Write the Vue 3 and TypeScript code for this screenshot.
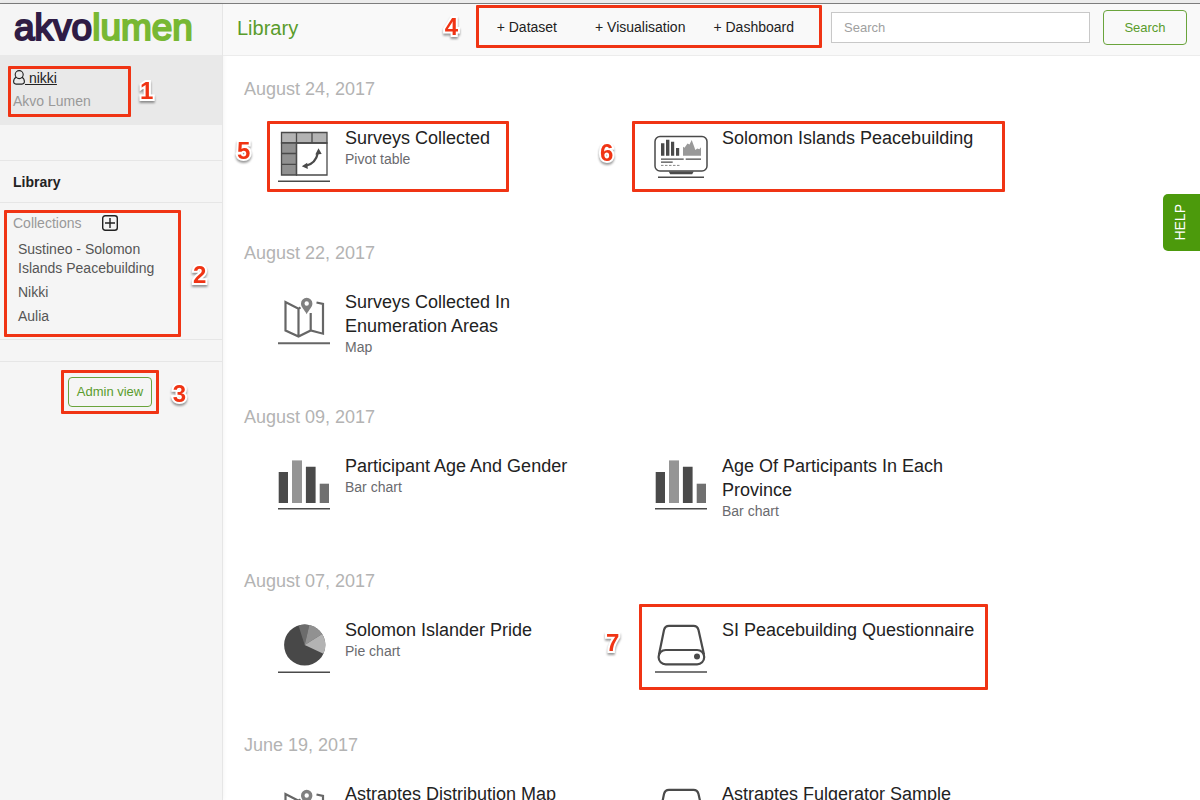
<script setup lang="ts">
import { ref } from 'vue'

type IconKind = 'pivot' | 'dashboard' | 'map' | 'bar' | 'pie' | 'dataset'

interface Entry {
  title: string
  kind: IconKind
  type?: string
  mark?: number
}

interface Group {
  date: string
  entries: Entry[]
}

const query = ref('')

const collections: string[] = ['Sustineo - Solomon Islands Peacebuilding', 'Nikki', 'Aulia']

const groups: Group[] = [
  {
    date: 'August 24, 2017',
    entries: [
      { title: 'Surveys Collected', kind: 'pivot', type: 'Pivot table', mark: 5 },
      { title: 'Solomon Islands Peacebuilding', kind: 'dashboard', mark: 6 },
    ],
  },
  {
    date: 'August 22, 2017',
    entries: [{ title: 'Surveys Collected In Enumeration Areas', kind: 'map', type: 'Map' }],
  },
  {
    date: 'August 09, 2017',
    entries: [
      { title: 'Participant Age And Gender', kind: 'bar', type: 'Bar chart' },
      { title: 'Age Of Participants In Each Province', kind: 'bar', type: 'Bar chart' },
    ],
  },
  {
    date: 'August 07, 2017',
    entries: [
      { title: 'Solomon Islander Pride', kind: 'pie', type: 'Pie chart' },
      { title: 'SI Peacebuilding Questionnaire', kind: 'dataset', mark: 7 },
    ],
  },
  {
    date: 'June 19, 2017',
    entries: [
      { title: 'Astraptes Distribution Map', kind: 'map' },
      { title: 'Astraptes Fulgerator Sample', kind: 'dataset' },
    ],
  },
]
</script>

<template>
  <div class="page">
    <div class="window-edge"></div>
    <div class="shell">
      <aside class="sidebar">
        <div class="logo"><span class="akvo">akvo</span><span class="lumen">lumen</span></div>

        <div class="user">
          <a href="#" class="user-name">
            <svg class="user-icon" width="12" height="15" viewBox="0 0 12 15" fill="none" stroke="#222" stroke-width="1.1">
              <circle cx="6.200" cy="4.600" r="4" />
              <path d="M3.200 7.200C1.400 8 .6 9.400.6 11.600c0 1.600.8 2.500 2.400 2.500h6c1.600 0 2.400-.9 2.400-2.500 0-2.200-.8-3.600-2.500-4.400" />
            </svg>&nbsp;nikki</a>
          <div class="org">Akvo Lumen</div>
          <span class="callout callout-1"><b>1</b></span>
        </div>

        <nav class="library-nav"><a href="#">Library</a></nav>

        <section class="collections">
          <div class="collections-head">
            <span>Collections</span>
            <button type="button" class="add" aria-label="Add collection">
              <svg width="16" height="16" viewBox="0 0 16 16" fill="none" stroke="#222" stroke-width="1.400">
                <rect x="0.700" y="0.700" width="14.600" height="14.600" rx="2.500" />
                <path d="M8 3v10M3 8h10" />
              </svg>
            </button>
          </div>
          <ul>
            <li v-for="name in collections" :key="name"><a href="#">{{ name }}</a></li>
          </ul>
          <span class="callout callout-2"><b>2</b></span>
        </section>

        <div class="admin">
          <div class="admin-wrap">
            <button type="button" class="outline admin-button">Admin view</button>
            <span class="callout callout-3"><b>3</b></span>
          </div>
        </div>
      </aside>

      <div class="main">
        <header class="topbar">
          <h1>Library</h1>
          <div class="create">
            <button type="button">+ Dataset</button>
            <button type="button">+ Visualisation</button>
            <button type="button">+ Dashboard</button>
            <span class="callout callout-4"><b>4</b></span>
          </div>
          <form class="search" @submit.prevent>
            <input v-model="query" type="text" placeholder="Search" aria-label="Search library" />
            <button type="submit" class="outline search-button">Search</button>
          </form>
        </header>

        <main class="listing">
          <section v-for="group in groups" :key="group.date" class="group">
            <h2>{{ group.date }}</h2>
            <ul class="entries">
              <li v-for="entry in group.entries" :key="entry.title" class="entry">
                <svg class="icon" width="54" height="58" viewBox="0 0 54 58" fill="none" aria-hidden="true">
                  <g v-if="entry.kind === 'pivot'" stroke="#4a4a4a" stroke-width="1.300">
                    <path d="M4.500 6.500H50V17H4.500Z" fill="#b3b3b3" />
                    <path d="M4.500 17H19.500V49H4.500Z" fill="#919191" />
                    <path d="M19.500 17H50V49H19.500ZM19.500 6.500V17M35 6.500V17M4.500 27.500h15M4.500 38.300h15" />
                    <path d="M28.500 40C35 38.500 39.500 34 40.800 27" stroke-width="2.200" />
                    <path d="M24.800 40.300l5.400-3.600.6 6.200zM41.500 22.200l3.200 5.900-6.400.3z" fill="#4a4a4a" stroke="none" />
                    <path d="M1 55.200H53" stroke-width="1.500" />
                  </g>
                  <g v-else-if="entry.kind === 'dashboard'" stroke="#4a4a4a" stroke-width="1.500">
                    <rect x="1" y="10.500" width="52" height="34.500" rx="5" />
                    <path d="M14.700 45.500h25l-1.500 2.700h-22z" fill="#4a4a4a" stroke="none" />
                    <path d="M7 17.300h3.400v12.400H7zM12 13.700h3.400v16H12zM17 15.700h3.200v14H17zM22 22h3.200v7.700H22z" fill="#4a4a4a" stroke="none" />
                    <path d="M29 29.700v-9l1.500 1 3-4.300 2 1 2.200-4.400 2.600 7 1 3 2-1.500 2 .8 1.700-2v8.400z" fill="#999" stroke="none" />
                    <path d="M7 33.200h22.700M31.700 33.200H47M7 36.200h11.700" stroke-width="1.200" />
                    <path d="M7 39.400h20" stroke="#888" stroke-width="1" stroke-dasharray="2.500 1.500" />
                    <path d="M4 51.200h46" />
                  </g>
                  <g v-else-if="entry.kind === 'map'" stroke="#666" stroke-width="2.200">
                    <path d="M23.500 17.300L21.500 18.800 8.500 12v28.500L21.500 46.500 33.700 40.500 46 43.700V14l-6.500-1.500M21.500 19v27M33.700 23v17.500" />
                    <path fill-rule="evenodd" d="M29.700 7.800a5.700 5.700 0 0 0-5.700 5.700c0 3.900 3.400 6 5.700 10.800 2.300-4.800 5.700-6.900 5.700-10.800a5.700 5.700 0 0 0-5.700-5.700zm0 3.500a2.200 2.200 0 1 1 0 4.400 2.200 2.200 0 0 1 0-4.400z" fill="#808080" stroke="none" />
                    <path d="M1 53.200H53" stroke-width="2" />
                  </g>
                  <g v-else-if="entry.kind === 'bar'">
                    <path d="M1.700 18H11v31H1.700zM28.900 12.700h9.700V49h-9.700z" fill="#4a4a4a" />
                    <path d="M15 6.400h10V49H15z" fill="#959595" />
                    <path d="M42.700 29.700H52V49h-9.300z" fill="#707070" />
                    <path d="M1 54.700H53" stroke="#4a4a4a" stroke-width="1.500" />
                  </g>
                  <g v-else-if="entry.kind === 'pie'">
                    <circle cx="27.700" cy="27" r="20.600" fill="#484848" />
                    <path d="M27.700 27L21.500 7.400A20.600 20.600 0 0 1 32.300 6.900Z" fill="#6c6c6c" />
                    <path d="M27.700 27L32.300 6.900A20.600 20.600 0 0 1 45.200 16.100Z" fill="#919191" />
                    <path d="M27.700 27L45.200 16.100A20.600 20.600 0 0 1 46.400 35.700Z" fill="#b3b3b3" />
                    <path d="M1 54.200H53" stroke="#4a4a4a" stroke-width="1.500" />
                  </g>
                  <g v-else stroke="#4a4a4a" stroke-width="2.200">
                    <path d="M5 36.500L10 12q1-4.200 5-4.200h24.500q4 0 5 4.200L50 36.500" />
                    <rect x="4.600" y="32" width="45.600" height="14.300" rx="7.100" />
                    <circle cx="43" cy="38.400" r="3" fill="#4a4a4a" stroke="none" />
                    <path d="M1 54H53" stroke-width="1.500" />
                  </g>
                </svg>
                <div class="entry-text">
                  <a href="#">{{ entry.title }}</a>
                  <span v-if="entry.type" class="kind">{{ entry.type }}</span>
                </div>
                <span v-if="entry.mark" class="callout" :class="'callout-' + entry.mark"><b>{{ entry.mark }}</b></span>
              </li>
            </ul>
          </section>
        </main>
      </div>
    </div>
    <button type="button" class="help"><span>HELP</span></button>
  </div>
</template>

<style>
body {
  margin: 0;
}
</style>

<style scoped>
.page {
  display: flex;
  flex-direction: column;
  height: 100vh;
  overflow: hidden;
  background: #fff;
  color: #222;
  font-family: "Liberation Sans", Arial, Helvetica, sans-serif;
  font-size: 14px;
  line-height: 18px;
}
.page * {
  box-sizing: border-box;
}
a {
  color: inherit;
  text-decoration: none;
}
ul {
  list-style: none;
  margin: 0;
  padding: 0;
}
button {
  font: inherit;
  color: inherit;
  background: none;
  border: 0;
  padding: 0;
  cursor: pointer;
}
.window-edge {
  flex: none;
  height: 4px;
  background: #ececec;
  border-bottom: 1px solid #7d7d7d;
}
.shell {
  flex: 1;
  display: flex;
  min-height: 0;
}

.sidebar {
  flex: none;
  width: 223px;
  background: #f5f5f5;
  border-right: 1px solid #e6e6e6;
  box-shadow: 0 0 5px rgba(0, 0, 0, 0.06);
}
.logo {
  height: 51px;
  padding-left: 14px;
  font-size: 37px;
  line-height: 48px;
  -webkit-text-stroke: 2px currentColor;
}
.akvo {
  color: #2f1c45;
}
.lumen {
  color: #78b833;
}
.user {
  position: relative;
  height: 70px;
  padding: 14px 13px 0;
  background: #e9e9e9;
}
.user-name {
  display: block;
  width: fit-content;
  text-decoration: underline;
}
.user-icon {
  vertical-align: -2px;
}
.org {
  margin-top: 5px;
  color: #999;
}
.library-nav {
  margin-top: 35px;
  padding: 12px 13px 11px;
  border: solid #e6e6e6;
  border-width: 1px 0;
  font-weight: bold;
}
.collections {
  position: relative;
  padding: 11px 13px 13px;
  border-bottom: 1px solid #e6e6e6;
}
.collections-head {
  display: flex;
  align-items: center;
  gap: 21px;
  color: #999;
}
.add {
  display: flex;
}
.collections ul {
  display: flex;
  flex-direction: column;
  gap: 5px;
  width: 150px;
  margin-top: 8px;
  padding-left: 5px;
  color: #555;
  line-height: 19px;
}
.admin {
  display: flex;
  justify-content: center;
  margin-top: 21px;
  padding: 15px 2px 0 0;
  border-top: 1px solid #e6e6e6;
}
.admin-wrap {
  position: relative;
}
.outline {
  border: 1px solid #6aa43c;
  border-radius: 4px;
  color: #5a9c2c;
  font-size: 13px;
}
.admin-button {
  display: block;
  height: 30px;
  padding: 0 8px;
}

.main {
  flex: 1;
  min-width: 0;
  display: flex;
  flex-direction: column;
}
.topbar {
  flex: none;
  display: flex;
  height: 52px;
  padding: 0 13px 0 14px;
  background: #f9f9f9;
  border-bottom: 1px solid #ececec;
}
h1 {
  margin: 0;
  font-size: 20px;
  font-weight: normal;
  line-height: 48px;
  color: #5a9c2c;
}
.create {
  position: relative;
  display: flex;
  gap: 28px;
  height: 46px;
  margin-left: auto;
}
.create button:first-child {
  margin-right: 10px;
}
.search {
  display: flex;
  align-items: center;
  gap: 13px;
  height: 47px;
  margin-left: 37px;
}
.search input {
  width: 259px;
  height: 31px;
  padding: 0 12px;
  border: 1px solid #c8c8c8;
  border-radius: 0;
  background: #fff;
  font: inherit;
  font-size: 13px;
  color: #222;
}
.search input::placeholder {
  color: #a0a0a0;
  opacity: 1;
}
.search-button {
  width: 84px;
  height: 35px;
}

.listing {
  flex: 1;
  min-height: 0;
  overflow: hidden;
  padding: 21px 0 0 21px;
}
.group {
  min-height: 164px;
}
h2 {
  margin: 0;
  font-size: 18px;
  font-weight: normal;
  line-height: 24px;
  color: #b3b3b3;
}
.entries {
  display: grid;
  grid-template-columns: repeat(auto-fill, 377px);
  margin-top: 25px;
  padding-left: 33px;
}
.entry {
  position: relative;
  display: flex;
  gap: 14px;
}
.icon {
  flex: none;
}
.entry-text {
  width: 260px;
  font-size: 18px;
  line-height: 24px;
}
.kind {
  display: block;
  font-size: 14px;
  line-height: 18px;
  color: #6a6a6e;
}

/* Numbered callouts drawn over the parts they explain */
.callout {
  position: absolute;
  border: 3px solid #f03414;
  border-radius: 1px;
  pointer-events: none;
}
.callout b {
  position: absolute;
  font-size: 24px;
  line-height: 24px;
  color: #f03414;
  -webkit-text-stroke: 4px #fff;
  paint-order: stroke fill;
  filter: drop-shadow(0 2px 1px rgba(0, 0, 0, 0.4));
}
.callout-1 {
  left: 8px;
  top: 11px;
  width: 123px;
  height: 51px;
}
.callout-1 b {
  left: 129px;
  top: 10px;
}
.callout-2 {
  left: 4px;
  top: 7px;
  width: 177px;
  height: 127px;
}
.callout-2 b {
  left: 186px;
  top: 50px;
}
.callout-3 {
  inset: -7px;
}
.callout-3 b {
  left: 109px;
  top: 9px;
}
.callout-4 {
  left: -21px;
  right: -28px;
  top: 1px;
  height: 43px;
}
.callout-4 b {
  left: -34px;
  top: 7px;
}
.callout-5 {
  left: -10px;
  top: -5px;
  width: 242px;
  height: 71px;
}
.callout-5 b {
  left: -33px;
  top: 15px;
}
.callout-6 {
  left: -22px;
  top: -5px;
  width: 373px;
  height: 71px;
}
.callout-6 b {
  left: -35px;
  top: 17px;
}
.callout-7 {
  left: -15px;
  top: -14px;
  width: 349px;
  height: 86px;
}
.callout-7 b {
  left: -36px;
  top: 24px;
}

.help {
  position: fixed;
  right: 0;
  top: 194px;
  display: flex;
  align-items: center;
  justify-content: center;
  width: 37px;
  height: 57px;
  padding-right: 4px;
  border-radius: 5px 0 0 5px;
  background: #4c9a0c;
  color: #fff;
}
.help span {
  writing-mode: vertical-rl;
  transform: rotate(180deg);
}
</style>
